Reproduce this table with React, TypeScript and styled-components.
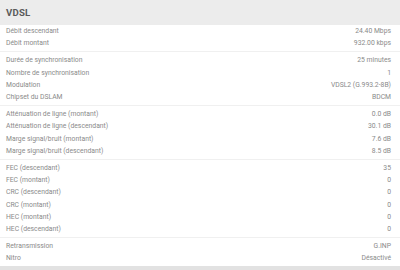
import React from "react";
import styled, { createGlobalStyle } from "styled-components";

const Global = createGlobalStyle`
  html, body { margin: 0; padding: 0; background: #ffffff; }
  body { font-family: Roboto, "Noto Sans", Arial, sans-serif; overflow: hidden; }
`;

const Page = styled.div`
  width: 400px;
  height: 270px;
  display: flex;
  flex-direction: column;
  background: #fff;
`;

const Header = styled.div`
  height: 25px;
  flex: 0 0 25px;
  background: #ececec;
  display: flex;
  align-items: center;
  padding: 0 6px 1px;
  box-sizing: border-box;
  font-weight: 700;
  font-size: 9.6px;
  color: #5a5a5a;
  letter-spacing: 0.2px;
`;

const Group = styled.div<{ $first?: boolean; $last?: boolean }>`
  display: flex;
  flex-direction: column;
  padding-top: ${(p) => (p.$first ? "0" : "2px")};
  padding-bottom: ${(p) => (p.$last ? "0" : "2px")};
  border-bottom: ${(p) => (p.$last ? "none" : "1px solid #f0f0f0")};
`;

const Row = styled.div`
  height: 12.2px;
  flex: 0 0 12.2px;
  display: flex;
  align-items: center;
  justify-content: space-between;
  padding: 0 9px 0 6px;
  font-size: 6.8px;
  color: #8a8a8a;
`;

const Footer = styled.div`
  flex: 1;
  background: #e2e2e2;
  margin-top: 1.5px;
`;

const groups: [string, string][][] = [
  [
    ["Débit descendant", "24.40 Mbps"],
    ["Débit montant", "932.00 kbps"],
  ],
  [
    ["Durée de synchronisation", "25 minutes"],
    ["Nombre de synchronisation", "1"],
    ["Modulation", "VDSL2 (G.993.2-8B)"],
    ["Chipset du DSLAM", "BDCM"],
  ],
  [
    ["Atténuation de ligne (montant)", "0.0 dB"],
    ["Atténuation de ligne (descendant)", "30.1 dB"],
    ["Marge signal/bruit (montant)", "7.6 dB"],
    ["Marge signal/bruit (descendant)", "8.5 dB"],
  ],
  [
    ["FEC (descendant)", "35"],
    ["FEC (montant)", "0"],
    ["CRC (descendant)", "0"],
    ["CRC (montant)", "0"],
    ["HEC (montant)", "0"],
    ["HEC (descendant)", "0"],
  ],
  [
    ["Retransmission", "G.INP"],
    ["Nitro", "Désactivé"],
  ],
];

export default function App() {
  return (
    <>
      <Global />
      <Page>
        <Header>VDSL</Header>
        {groups.map((g, i) => (
          <Group key={i} $first={i === 0} $last={i === groups.length - 1}>
            {g.map(([k, v]) => (
              <Row key={k}>
                <span>{k}</span>
                <span>{v}</span>
              </Row>
            ))}
          </Group>
        ))}
        <Footer />
      </Page>
    </>
  );
}
